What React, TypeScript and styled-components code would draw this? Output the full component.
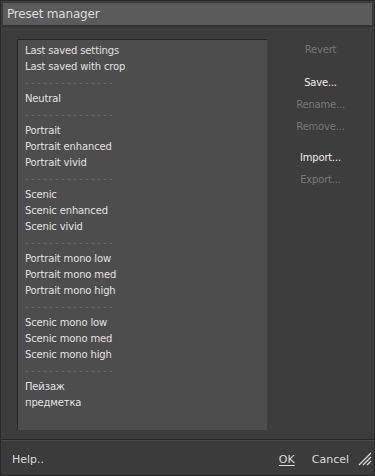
import React from 'react';
import styled, { createGlobalStyle } from 'styled-components';

const GlobalStyle = createGlobalStyle`
  html, body {
    margin: 0;
    padding: 0;
    background: #2b2b2b;
  }
  * {
    box-sizing: border-box;
  }
`;

const Window = styled.div`
  width: 375px;
  height: 476px;
  display: flex;
  flex-direction: column;
  background: #3d3d3d;
  border: 1px solid #2a2a2a;
  font-family: 'DejaVu Sans', Verdana, sans-serif;
`;

const TitleBar = styled.div`
  margin: 1px 1px 0 1px;
  height: 25px;
  display: flex;
  align-items: center;
  padding-left: 4px;
  background: #5b5b5b;
  border: 1px solid #3a3a3a;
  border-bottom: 2px solid #333;
  color: #dedede;
  font-size: 12px;
  letter-spacing: -0.2px;
`;

const Body = styled.div`
  flex: 1;
  display: flex;
  padding: 12px 0 9px 16px;
  border-bottom: 1px solid #262626;
`;

const PresetList = styled.ul`
  list-style: none;
  margin: 0;
  width: 250px;
  padding: 3px 0 0 7px;
  background: #4d4d4d;
  border-top: 1px solid #262626;
  border-left: 1px solid #262626;
`;

const PresetItem = styled.li<{ $separator?: boolean }>`
  height: 16px;
  line-height: 16px;
  font-size: 10px;
  white-space: nowrap;
  color: ${p => (p.$separator ? '#6a6a6a' : '#e2e2e2')};
  letter-spacing: ${p => (p.$separator ? '2.4px' : '-0.15px')};
`;

const ActionColumn = styled.div`
  flex: 1;
  display: flex;
  flex-direction: column;
  align-items: center;
  margin-top: -1px;
`;

const ActionButton = styled.button<{ $enabled?: boolean; $gap?: number }>`
  background: none;
  border: none;
  padding: 0;
  height: 22px;
  margin-top: ${p => p.$gap ?? 0}px;
  font-family: inherit;
  font-size: 10px;
  letter-spacing: -0.2px;
  color: ${p => (p.$enabled ? '#ececec' : '#777')};
  cursor: ${p => (p.$enabled ? 'pointer' : 'default')};
`;

const Footer = styled.div`
  height: 35px;
  display: flex;
  align-items: center;
  padding: 2px 2px 0 11px;
  border-top: 1px solid #4a4a4a;
  background: #3b3b3b;
`;

const FooterLink = styled.span<{ $underline?: boolean }>`
  font-size: 11px;
  color: #dcdcdc;
  text-decoration: ${p => (p.$underline ? 'underline' : 'none')};
  text-underline-offset: 2px;
`;

const FooterRight = styled.div`
  margin-left: auto;
  display: flex;
  align-items: center;
  gap: 17px;
`;

const Grip = styled.svg`
  width: 14px;
  height: 14px;
  margin-left: -8px;
`;

const SEP = '---------------';

const presets: string[] = [
  'Last saved settings',
  'Last saved with crop',
  SEP,
  'Neutral',
  SEP,
  'Portrait',
  'Portrait enhanced',
  'Portrait vivid',
  SEP,
  'Scenic',
  'Scenic enhanced',
  'Scenic vivid',
  SEP,
  'Portrait mono low',
  'Portrait mono med',
  'Portrait mono high',
  SEP,
  'Scenic mono low',
  'Scenic mono med',
  'Scenic mono high',
  SEP,
  'Пейзаж',
  'предметка',
];

const actions = [
  { label: 'Revert', enabled: false, gap: 0 },
  { label: 'Save...', enabled: true, gap: 11 },
  { label: 'Rename...', enabled: false, gap: 0 },
  { label: 'Remove...', enabled: false, gap: 0 },
  { label: 'Import...', enabled: true, gap: 9 },
  { label: 'Export...', enabled: false, gap: 0 },
];

const App: React.FC = () => {
  return (
    <>
      <GlobalStyle />
      <Window>
        <TitleBar>Preset manager</TitleBar>
        <Body>
          <PresetList>
            {presets.map((name, i) => (
              <PresetItem key={i} $separator={name === SEP}>
                {name}
              </PresetItem>
            ))}
          </PresetList>
          <ActionColumn>
            {actions.map(a => (
              <ActionButton key={a.label} $enabled={a.enabled} $gap={a.gap}>
                {a.label}
              </ActionButton>
            ))}
          </ActionColumn>
        </Body>
        <Footer>
          <FooterLink>Help..</FooterLink>
          <FooterRight>
            <FooterLink $underline>OK</FooterLink>
            <FooterLink>Cancel</FooterLink>
            <Grip viewBox="0 0 14 14">
              <g stroke="#d8d8d8" strokeWidth="1.2">
                <line x1="13" y1="1" x2="1" y2="13" />
                <line x1="13" y1="5" x2="5" y2="13" />
                <line x1="13" y1="9" x2="9" y2="13" />
              </g>
            </Grip>
          </FooterRight>
        </Footer>
      </Window>
    </>
  );
};

export default App;
